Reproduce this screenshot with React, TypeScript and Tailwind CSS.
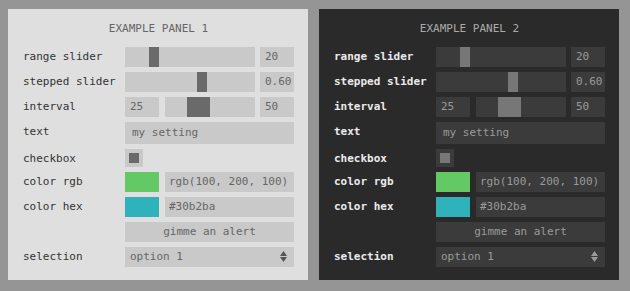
import React from "react";

type Theme = {
  panel: string;
  ctrl: string;
  thumb: string;
  label: string;
  value: string;
  title: string;
  arrow: string;
};

const light: Theme = {
  panel: "bg-[#dfdfdf]",
  ctrl: "bg-[#c9c9c9]",
  thumb: "bg-[#6a6a6a]",
  label: "text-[#333333] font-normal",
  value: "text-[#666666]",
  title: "text-[#666666]",
  arrow: "#555555",
};

const dark: Theme = {
  panel: "bg-[#2a2a2a]",
  ctrl: "bg-[#3b3b3b]",
  thumb: "bg-[#777777]",
  label: "text-[#ebebeb] font-bold",
  value: "text-[#9a9a9a]",
  title: "text-[#aaaaaa]",
  arrow: "#9a9a9a",
};

function Row({
  t,
  label,
  h = "h-[20px]",
  children,
}: {
  t: Theme;
  label: string;
  h?: string;
  children: React.ReactNode;
}) {
  return (
    <div className={`flex ${h}`}>
      <div className={`w-[102px] shrink-0 leading-[19px] ${t.label}`}>{label}</div>
      <div className="w-[169px] flex">{children}</div>
    </div>
  );
}

function Slider({ t, w, pos, thumbW = 10 }: { t: Theme; w: number; pos: number; thumbW?: number }) {
  return (
    <div className={`relative h-full ${t.ctrl}`} style={{ width: w }}>
      <div className={`absolute top-0 h-full ${t.thumb}`} style={{ left: pos, width: thumbW }} />
    </div>
  );
}

function Box({ t, w, children, pl = "pl-[5px]" }: { t: Theme; w: number; children: React.ReactNode; pl?: string }) {
  return (
    <div className={`h-full ${t.ctrl} ${t.value} ${pl} leading-[20px] whitespace-nowrap`} style={{ width: w }}>
      {children}
    </div>
  );
}

function Panel({ t, n }: { t: Theme; n: number }) {
  return (
    <div className={`w-[300px] h-[271px] ${t.panel} pl-[15px] pt-[13px]`}>
      <div className={`w-[271px] text-center leading-[14px] ${t.title}`}>EXAMPLE PANEL {n}</div>
      <div className="mt-[11px] flex flex-col gap-[5px]">
        <Row t={t} label="range slider">
          <Slider t={t} w={130} pos={24} />
          <div className="ml-[5px]">
            <Box t={t} w={34}>20</Box>
          </div>
        </Row>
        <Row t={t} label="stepped slider">
          <Slider t={t} w={130} pos={72} />
          <div className="ml-[5px]">
            <Box t={t} w={34}>0.60</Box>
          </div>
        </Row>
        <Row t={t} label="interval">
          <Box t={t} w={34}>25</Box>
          <div className="ml-[6px] h-full">
            <Slider t={t} w={90} pos={22} thumbW={23} />
          </div>
          <div className="ml-[5px]">
            <Box t={t} w={34}>50</Box>
          </div>
        </Row>
        <Row t={t} label="text" h="h-[22px]">
          <div className={`w-[169px] h-full ${t.ctrl} ${t.value} pl-[7px] leading-[22px]`}>my setting</div>
        </Row>
        <Row t={t} label="checkbox" h="h-[18px]">
          <div className={`w-[18px] h-[18px] ${t.ctrl} flex items-center justify-center`}>
            <div className={`w-[10px] h-[10px] ${t.thumb}`} />
          </div>
        </Row>
        <Row t={t} label="color rgb">
          <div className="w-[34px] h-full bg-[#64c864]" />
          <div className="ml-[6px] h-full">
            <Box t={t} w={129} pl="pl-[4px]">rgb(100, 200, 100)</Box>
          </div>
        </Row>
        <Row t={t} label="color hex">
          <div className="w-[34px] h-full bg-[#30b2ba]" />
          <div className="ml-[6px] h-full">
            <Box t={t} w={129} pl="pl-[4px]">#30b2ba</Box>
          </div>
        </Row>
        <Row t={t} label="">
          <div className={`w-[169px] h-full ${t.ctrl} ${t.value} text-center leading-[20px]`}>gimme an alert</div>
        </Row>
        <Row t={t} label="selection">
          <div className={`relative w-[169px] h-full ${t.ctrl} ${t.value} pl-[5px] leading-[20px]`}>
            option 1
            <svg className="absolute right-[7px] top-[4px]" width="7" height="11" viewBox="0 0 7 11">
              <polygon points="3.5,0 7,5 0,5" fill={t.arrow} />
              <polygon points="0,6 7,6 3.5,11" fill={t.arrow} />
            </svg>
          </div>
        </Row>
      </div>
    </div>
  );
}

export default function App() {
  return (
    <div
      className="w-[630px] h-[291px] bg-[#959595] flex pl-[8px] pt-[9px] gap-[11px] text-[11px]"
      style={{ fontFamily: '"DejaVu Sans Mono", monospace' }}
    >
      <Panel t={light} n={1} />
      <Panel t={dark} n={2} />
    </div>
  );
}
